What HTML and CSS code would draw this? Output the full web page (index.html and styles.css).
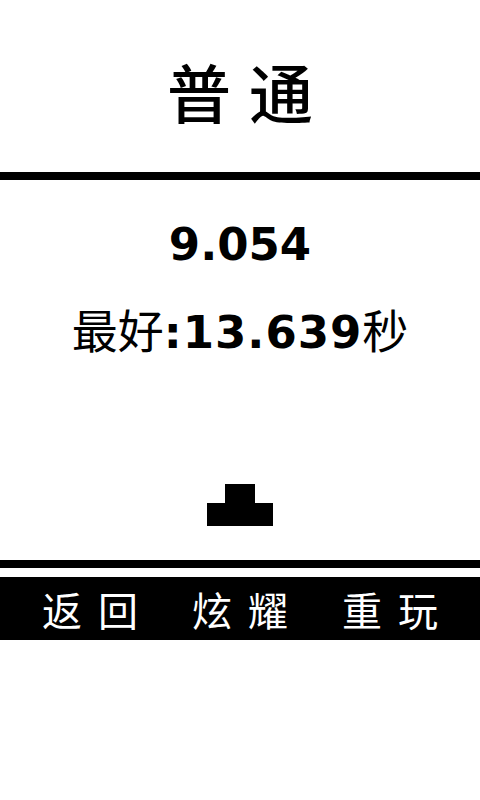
FILE: index.html
```html
<!DOCTYPE html>
<html lang="zh">
<head>
<meta charset="utf-8">
<link rel="stylesheet" href="styles.css">
</head>
<body>
<div class="screen">
  <header class="header"><h1 class="title">普通</h1></header>
  <div class="rule"></div>
  <main class="main">
    <div class="score">9.054</div>
    <div class="best"><span class="cjk">最好</span><span class="num">:13.639</span><span class="cjk">秒</span></div>
    <div class="piece">
      <div class="piece-top"></div>
      <div class="piece-bottom"></div>
    </div>
  </main>
  <div class="rule rule-bottom"></div>
  <nav class="bar">
    <div class="btn">返回</div>
    <div class="btn">炫耀</div>
    <div class="btn">重玩</div>
  </nav>
</div>
</body>
</html>
```
FILE: styles.css
```css
html, body {
  margin: 0;
  padding: 0;
  background: #fff;
}
body {
  font-family: "Noto Sans CJK SC", "Noto Sans", sans-serif;
  color: #000;
}
.screen {
  width: 480px;
  height: 800px;
  display: flex;
  flex-direction: column;
}
.header {
  height: 172px;
  display: flex;
  align-items: center;
  justify-content: center;
}
.title {
  margin: 0;
  font-size: 64px;
  font-weight: 500;
  line-height: 1;
  letter-spacing: 18px;
  margin-right: -18px;
  padding-top: 8px;
}
.rule {
  height: 8px;
  background: #000;
}
.main {
  height: 380px;
  display: flex;
  flex-direction: column;
  align-items: center;
}
.score {
  margin-top: 40px;
  font-family: "DejaVu Sans", sans-serif;
  font-weight: 700;
  font-size: 45px;
  line-height: 50px;
}
.best {
  margin-top: 30px;
  font-size: 46px;
  line-height: 56px;
  display: flex;
  align-items: baseline;
}
.best .num {
  font-family: "DejaVu Sans", sans-serif;
  font-weight: 700;
  font-size: 45px;
  letter-spacing: 1px;
}
.piece {
  margin-top: 123px;
  display: flex;
  flex-direction: column;
  align-items: center;
}
.piece-top {
  width: 30px;
  height: 19px;
  background: #000;
}
.piece-bottom {
  width: 66px;
  height: 23px;
  background: #000;
}
.rule-bottom {
  margin-bottom: 9px;
}
.bar {
  height: 63px;
  background: #000;
  display: flex;
  justify-content: center;
  align-items: center;
}
.btn {
  width: 150px;
  text-align: center;
  color: #fff;
  font-size: 40px;
  line-height: 1;
  letter-spacing: 16px;
  text-indent: 16px;
}
```
